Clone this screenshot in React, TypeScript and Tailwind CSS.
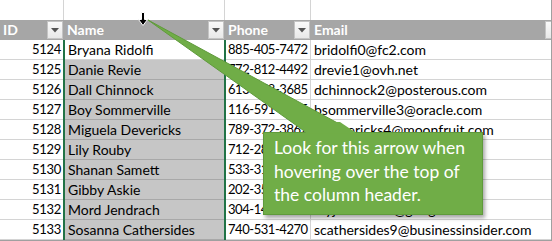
import React from 'react';

const rows = [
  ['5124', 'Bryana Ridolfi', '885-405-7472', 'bridolfi0@fc2.com'],
  ['5125', 'Danie Revie', '772-812-4492', 'drevie1@ovh.net'],
  ['5126', 'Dall Chinnock', '613-458-3685', 'dchinnock2@posterous.com'],
  ['5127', 'Boy Sommerville', '116-591-2205', 'bsommerville3@oracle.com'],
  ['5128', 'Miguela Devericks', '789-372-3862', 'mdevericks4@moonfruit.com'],
  ['5129', 'Lily Rouby', '712-283-9921', 'lrouby5@google.ca'],
  ['5130', 'Shanan Samett', '533-312-6120', 'ssamett6@usnews.com'],
  ['5131', 'Gibby Askie', '202-350-7743', 'gaskie7@t-online.de'],
  ['5132', 'Mord Jendrach', '304-146-0082', 'myjendrach8@google.nl'],
  ['5133', 'Sosanna Cathersides', '740-531-4270', 'scathersides9@businessinsider.com'],
];

const cols = 'grid grid-cols-[64px_161px_86px_1fr]';

const FilterButton = () => (
  <span className="w-[16px] h-[18px] shrink-0 flex items-center justify-center border border-[#c4c4c4] bg-gradient-to-b from-[#fafafa] to-[#e8e8e8]">
    <svg width="8" height="5" viewBox="0 0 8 5">
      <path d="M0 0 L8 0 L4 4.5 Z" fill="#555" />
    </svg>
  </span>
);

const HeaderCell = ({ label }: { label: string }) => (
  <div className="h-[20px] flex items-center justify-between pl-[3px] pr-[1px] overflow-hidden">
    <span className="font-bold text-white">{label}</span>
    <FilterButton />
  </div>
);

export default function App() {
  return (
    <div
      className="relative w-[552px] h-[241px] overflow-hidden bg-white text-black border-r border-b border-[#a0a0a0] text-[14px] leading-none"
      style={{ fontFamily: 'Lato, "Open Sans", sans-serif' }}
    >
      {/* empty row above the table */}
      <div className={`${cols} h-[20px]`}>
        <div className="border-r border-[#d4d4d4]" />
        <div className="border-r border-[#d4d4d4]" />
        <div className="border-r border-[#d4d4d4]" />
        <div />
      </div>

      {/* header */}
      <div className={`${cols} bg-[#a6a6a6]`}>
        <HeaderCell label="ID" />
        <HeaderCell label="Name" />
        <HeaderCell label="Phone" />
        <div className="h-[20px] flex items-center justify-between pl-[3px] overflow-hidden">
          <span className="font-bold text-white">Email</span>
          <span className="w-[6px] h-[18px] border border-[#c4c4c4] border-r-0 bg-gradient-to-b from-[#fafafa] to-[#e8e8e8]" />
        </div>
      </div>

      {rows.map((r, i) => (
        <div key={r[0]} className={`${cols} h-[20px]`}>
          <div className="border-r border-b border-[#d4d4d4] flex items-center justify-end pr-[2px] text-[13px] tracking-[-0.3px]">{r[0]}</div>
          <div
            className={`border-r border-b flex items-center pl-[4px] whitespace-nowrap ${
              i === 0 ? 'bg-white border-[#d4d4d4]' : 'bg-[#c6c6c6] border-[#a8a8a8]'
            }`}
          >
            {r[1]}
          </div>
          <div className="border-r border-b border-[#d4d4d4] flex items-center pl-[3px] whitespace-nowrap text-[13px] tracking-[-0.45px]">{r[2]}</div>
          <div className="border-b border-[#d4d4d4] flex items-center pl-[3px] whitespace-nowrap">{r[3]}</div>
        </div>
      ))}

      {/* selection border on the Name column */}
      <div className="absolute left-[63px] top-[40px] w-[163px] h-[201px] border-x-2 border-[#217346] pointer-events-none" />

      {/* column-select cursor */}
      <svg className="absolute left-[138px] top-[12px]" width="10" height="14" viewBox="0 0 10 14">
        <path d="M3.5 0.5 H6.5 V7.5 H9.5 L5 13.5 L0.5 7.5 H3.5 Z" fill="#000" stroke="#fff" strokeWidth="1" />
      </svg>

      {/* callout pointer */}
      <svg className="absolute left-0 top-0" width="552" height="241" viewBox="0 0 552 241">
        <polygon points="148,20 307,133 356,133" fill="#70ad47" stroke="#5f9a3b" strokeWidth="1" />
      </svg>

      {/* callout box */}
      <div className="absolute left-[263px] top-[132px] w-[220px] h-[83px] bg-[#70ad47] border border-[#5f9a3b] shadow-[2px_3px_4px_rgba(0,0,0,0.35)] pl-[10px] pt-[3px] text-white text-[17.5px] leading-[23.5px]">
        <div>Look for this arrow when</div>
        <div>hovering over the top of</div>
        <div>the column header.</div>
      </div>
      {/* seam between pointer and box */}
      <svg className="absolute left-0 top-0" width="552" height="241" viewBox="0 0 552 241">
        <polygon points="306,133.5 357,133.5 340,122 300,122" fill="#70ad47" />
      </svg>
    </div>
  );
}
